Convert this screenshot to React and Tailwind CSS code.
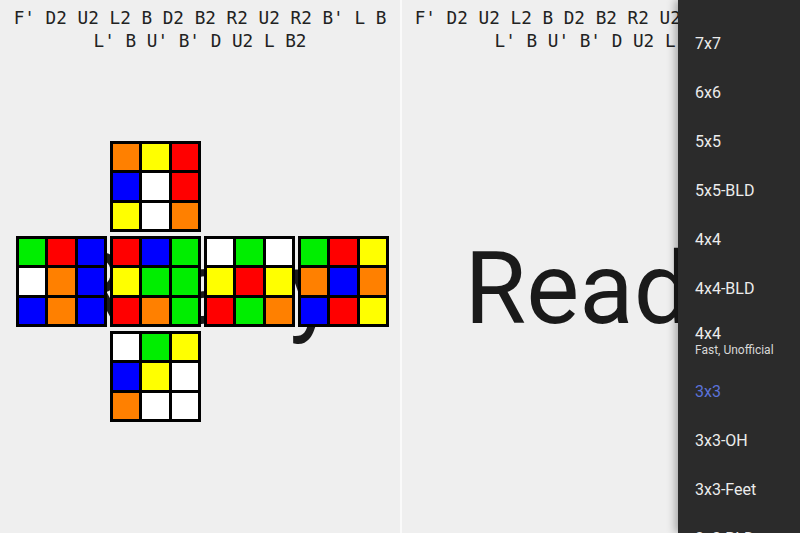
import React from "react";

const C = {
  o: "bg-[#ff8000]",
  y: "bg-[#ffff00]",
  r: "bg-[#ff0000]",
  b: "bg-[#0000ff]",
  w: "bg-white",
  g: "bg-[#00ee00]",
};

const faces = {
  U: "oyr bwr ywo",
  L: "grb wob bob",
  F: "rbg ygg rog",
  R: "wgw yry rgo",
  B: "gry obo bry",
  D: "wgy byw oww",
};

function Face({ f }) {
  const cells = faces[f].replace(/ /g, "").split("");
  return (
    <div className="w-[91px] h-[91px] bg-black p-[3px] grid grid-cols-3 grid-rows-3 gap-[3px]">
      {cells.map((c, i) => (
        <div key={i} className={C[c]} />
      ))}
    </div>
  );
}

function Scramble() {
  return (
    <div
      className="pt-[7px] text-center text-[17.7px] leading-[23px] text-[#222]"
      style={{ fontFamily: '"DejaVu Sans Mono", monospace' }}
    >
      <div className="whitespace-pre">F' D2 U2 L2 B D2 B2 R2 U2 R2 B' L B</div>
      <div className="whitespace-pre">L' B U' B' D U2 L B2</div>
    </div>
  );
}

function Ready() {
  return (
    <div
      className="mt-[186px] flex justify-center text-[100px] leading-[100px] text-[#1a1a1a] whitespace-nowrap"
      style={{ fontFamily: "Roboto, sans-serif" }}
    >
      Ready
    </div>
  );
}

const items = [
  "Clock",
  "7x7",
  "6x6",
  "5x5",
  "5x5-BLD",
  "4x4",
  "4x4-BLD",
  "SUB",
  "3x3",
  "3x3-OH",
  "3x3-Feet",
  "3x3-BLD",
];

export default function App() {
  return (
    <div className="w-[800px] h-[533px] flex bg-[#efefef] overflow-hidden">
      <div className="w-[400px] relative flex flex-col overflow-hidden">
        <Scramble />
        <Ready />
        <div className="absolute left-[16px] top-[141px] grid grid-cols-[91px_91px_91px_91px] gap-x-[3px] gap-y-[4px]">
          <div />
          <Face f="U" />
          <div />
          <div />
          <Face f="L" />
          <Face f="F" />
          <Face f="R" />
          <Face f="B" />
          <div />
          <Face f="D" />
        </div>
      </div>
      <div className="w-[2px] bg-[#fafafa]" />
      <div className="flex-1 relative flex flex-col overflow-hidden">
        <Scramble />
        <Ready />
        <div
          className="absolute top-0 right-0 bottom-0 w-[122px] bg-[#2b2b2b] shadow-[-3px_0_8px_rgba(0,0,0,0.3)] flex flex-col overflow-hidden"
          style={{ fontFamily: "Roboto, sans-serif" }}
        >
          <div className="mt-[-29.5px] flex flex-col">
            {items.map((it) =>
              it === "SUB" ? (
                <div key={it} className="h-[54px] flex flex-col justify-center pl-[17px]">
                  <div className="text-[16px] leading-[19px] text-[#ececec]">4x4</div>
                  <div className="text-[12px] leading-[15px] text-[#d8d8d8]">Fast, Unofficial</div>
                </div>
              ) : (
                <div
                  key={it}
                  className={
                    "h-[49px] flex items-center pl-[17px] text-[16px] " +
                    (it === "3x3" ? "text-[#5b72d8]" : "text-[#ececec]")
                  }
                >
                  {it}
                </div>
              )
            )}
          </div>
        </div>
      </div>
    </div>
  );
}
